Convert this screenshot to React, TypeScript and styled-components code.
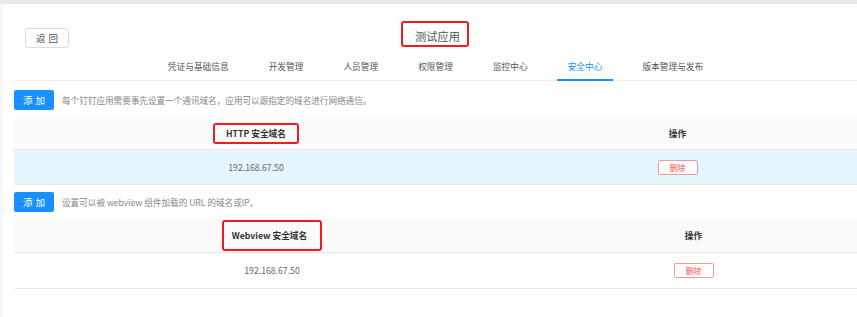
import React from "react";
import styled, { createGlobalStyle } from "styled-components";

const GlobalStyle = createGlobalStyle`
  body {
    margin: 0;
    background: #ffffff;
    font-family: "Noto Sans CJK SC", "Liberation Sans", sans-serif;
    overflow: hidden;
  }
`;

const TopBand = styled.div`
  height: 4px;
  background: #e8e9ed;
`;

const Page = styled.div`
  border-left: 3px solid #f6f6f7;
  min-height: 313px;
  background: #ffffff;
`;

const Header = styled.div`
  display: grid;
  grid-template-columns: 1fr auto 1fr;
  align-items: start;
  padding-top: 17px;
`;

const BackButton = styled.button`
  justify-self: start;
  margin: 7px 0 0 22px;
  width: 44px;
  height: 20px;
  padding: 0;
  border: 1px solid #dcdcdc;
  border-radius: 3px;
  background: #ffffff;
  color: #555;
  font-family: inherit;
  font-size: 9.5px;
  letter-spacing: 3px;
  text-indent: 3px;
`;

const Marked = styled.span<{ $pad: string }>`
  display: inline-block;
  padding: ${(p) => p.$pad};
  border: 2px solid #ee1c1c;
  border-radius: 3px;
`;

const Title = styled.div`
  color: #555;
  font-size: 11.2px;
  line-height: 14px;
  margin-left: 10px;
`;

const Tabs = styled.div`
  display: flex;
  justify-content: center;
  gap: 18px;
  margin: 7px 0 0 11px;
  border-bottom: 1px solid #ececec;
`;

const Tab = styled.div<{ $active?: boolean }>`
  padding: 0 11px;
  height: 24px;
  line-height: 24px;
  font-size: 8.7px;
  color: ${(p) => (p.$active ? "#1890ff" : "#555")};
  border-bottom: 2px solid ${(p) => (p.$active ? "#1890ff" : "transparent")};
  margin-bottom: -1px;
`;

const Content = styled.div`
  padding: 9px 0 0 11px;
`;

const Toolbar = styled.div`
  display: flex;
  align-items: center;
  gap: 8px;
  height: 20px;
  margin-bottom: 7px;
`;

const AddButton = styled.button`
  width: 40px;
  height: 20px;
  padding: 0;
  border: none;
  border-radius: 2px;
  background: #1890ff;
  color: #fff;
  font-family: inherit;
  font-size: 9.5px;
  letter-spacing: 3px;
  text-indent: 3px;
`;

const Hint = styled.span`
  color: #888;
  font-size: 8.6px;
`;

const Table = styled.div<{ $first: number }>`
  display: grid;
  grid-template-columns: ${(p) => p.$first}px 1fr;
  margin-bottom: 7px;
`;

const HeadCell = styled.div<{ $height: number }>`
  height: ${(p) => p.$height}px;
  display: flex;
  align-items: center;
  justify-content: center;
  background: #fafafa;
  border-bottom: 1px solid #e8e8e8;
  color: #333;
  font-size: 8.7px;
  font-weight: 700;
`;

const Cell = styled.div<{ $height: number; $hover?: boolean }>`
  height: ${(p) => p.$height}px;
  display: flex;
  align-items: center;
  justify-content: center;
  background: ${(p) => (p.$hover ? "#e4f5fe" : "#ffffff")};
  border-bottom: 1px solid #e8e8e8;
  color: #666;
  font-size: 8.7px;
`;

const DeleteButton = styled.button`
  width: 40px;
  height: 15px;
  padding: 0;
  border: 1px solid #f29a94;
  border-radius: 2px;
  background: #fff;
  color: #f0554b;
  font-family: inherit;
  font-size: 8px;
  line-height: 13px;
`;

interface DomainTableProps {
  hint: string;
  title: React.ReactNode;
  first: number;
  headHeight: number;
  rowHeight: number;
  ip: string;
  hover?: boolean;
}

const DomainTable: React.FC<DomainTableProps> = ({ hint, title, first, headHeight, rowHeight, ip, hover }) => (
  <>
    <Toolbar>
      <AddButton>添加</AddButton>
      <Hint>{hint}</Hint>
    </Toolbar>
    <Table $first={first}>
      <HeadCell $height={headHeight}>{title}</HeadCell>
      <HeadCell $height={headHeight}>操作</HeadCell>
      <Cell $height={rowHeight} $hover={hover}>{ip}</Cell>
      <Cell $height={rowHeight} $hover={hover}>
        <DeleteButton>删除</DeleteButton>
      </Cell>
    </Table>
  </>
);

const tabs = ["凭证与基础信息", "开发管理", "人员管理", "权限管理", "监控中心", "安全中心", "版本管理与发布"];

export default function App() {
  return (
    <>
      <GlobalStyle />
      <TopBand />
      <Page>
        <Header>
          <BackButton>返回</BackButton>
          <Title>
            <Marked $pad="6px 7px 2px 12px">测试应用</Marked>
          </Title>
          <div />
        </Header>
        <Tabs>
          {tabs.map((t) => (
            <Tab key={t} $active={t === "安全中心"}>
              {t}
            </Tab>
          ))}
        </Tabs>
        <Content>
          <DomainTable
            hint="每个钉钉应用需要事先设置一个通讯域名，应用可以跟指定的域名进行网络通信。"
            title={<Marked $pad="2px 11px">HTTP 安全域名</Marked>}
            first={484}
            headHeight={32}
            rowHeight={34}
            ip="192.168.67.50"
            hover
          />
          <DomainTable
            hint="设置可以被 webview 组件加载的 URL 的域名或IP。"
            title={<Marked $pad="7px 13px 7px 8px">Webview 安全域名</Marked>}
            first={516}
            headHeight={33}
            rowHeight={35}
            ip="192.168.67.50"
          />
        </Content>
      </Page>
    </>
  );
}
